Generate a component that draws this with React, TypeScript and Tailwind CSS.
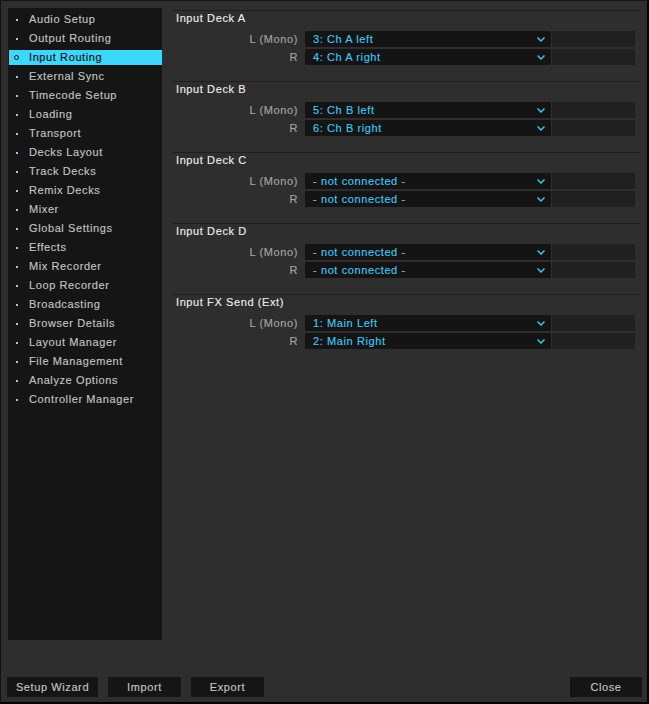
const menu = [
  "Audio Setup",
  "Output Routing",
  "Input Routing",
  "External Sync",
  "Timecode Setup",
  "Loading",
  "Transport",
  "Decks Layout",
  "Track Decks",
  "Remix Decks",
  "Mixer",
  "Global Settings",
  "Effects",
  "Mix Recorder",
  "Loop Recorder",
  "Broadcasting",
  "Browser Details",
  "Layout Manager",
  "File Management",
  "Analyze Options",
  "Controller Manager",
];

const sections = [
  { title: "Input Deck A", l: "3: Ch A left", r: "4: Ch A right" },
  { title: "Input Deck B", l: "5: Ch B left", r: "6: Ch B right" },
  { title: "Input Deck C", l: "- not connected -", r: "- not connected -" },
  { title: "Input Deck D", l: "- not connected -", r: "- not connected -" },
  { title: "Input FX Send (Ext)", l: "1: Main Left", r: "2: Main Right" },
];

function Chevron() {
  return (
    <svg width="8" height="5" viewBox="0 0 8 5" className="shrink-0">
      <path d="M0.5 0.5 L4 4 L7.5 0.5" fill="none" stroke="#3fc3e8" strokeWidth="1.5" />
    </svg>
  );
}

function RouteRow({ label, value }: { label: string; value: string }) {
  return (
    <div className="flex items-center h-[16px]">
      <div className="w-[125px] text-right text-[#a4a4a4]">{label}</div>
      <div className="ml-[7px] w-[246px] h-full bg-[#141414] flex items-center justify-between pl-[8px] pr-[6px]">
        <span className="text-[#42c6f0]">{value}</span>
        <Chevron />
      </div>
      <div className="ml-px w-[83px] h-full bg-[#202020]" />
    </div>
  );
}

function FooterButton({ label, width }: { label: string; width: string }) {
  return (
    <button className={`${width} h-[20px] bg-[#151515] text-[#c4c4c4] flex items-center justify-center`}>
      {label}
    </button>
  );
}

export default function App() {
  return (
    <div
      className="w-[649px] h-[704px] bg-[#2e2e2e] border-l border-t border-l-[#111] border-t-[#151515] border-r-2 border-b-2 border-r-black border-b-black flex flex-col text-[11px] leading-[13px] tracking-[0.6px] [-webkit-text-stroke:0.15px_currentColor]"
      style={{ fontFamily: '"Liberation Sans", Arial, sans-serif' }}
    >
      <div className="flex pt-[7px] pl-[7px]">
        {/* Sidebar */}
        <div className="w-[154px] h-[632px] bg-[#151515] pt-[4px] flex flex-col gap-[4px]">
          {menu.map((item) => {
            const active = item === "Input Routing";
            return (
              <div
                key={item}
                className={`ml-px h-[15px] flex items-center ${active ? "bg-[#3fd6fb] text-[#111]" : "text-[#c2c2c2]"}`}
              >
                <div className="ml-[5px] w-[5px] h-[5px] flex items-center justify-center">
                  {active ? (
                    <div className="w-[5px] h-[5px] rounded-full border border-[#1a1a1a]" />
                  ) : (
                    <div className="w-[2px] h-[2px] bg-[#bdbdbd]" />
                  )}
                </div>
                <span className="ml-[10px]">{item}</span>
              </div>
            );
          })}
        </div>

        {/* Main panel */}
        <div className="ml-[11px] w-[467px] pt-[2px]">
          {sections.map((s) => (
            <div key={s.title} className="border-t border-[#1e1e1e] h-[71px]">
              <div className="h-[15px] pl-[3px] flex items-center text-[#ececec]">{s.title}</div>
              <div className="mt-[5px] flex flex-col gap-[2px]">
                <RouteRow label="L (Mono)" value={s.l} />
                <RouteRow label="R" value={s.r} />
              </div>
            </div>
          ))}
        </div>
      </div>

      {/* Footer */}
      <div className="mt-auto flex items-center pl-[6px] pr-[5px] pb-[5px]">
        <div className="flex gap-[10px]">
          <FooterButton label="Setup Wizard" width="w-[91px]" />
          <FooterButton label="Import" width="w-[73px]" />
          <FooterButton label="Export" width="w-[73px]" />
        </div>
        <div className="ml-auto">
          <FooterButton label="Close" width="w-[72px]" />
        </div>
      </div>
    </div>
  );
}
